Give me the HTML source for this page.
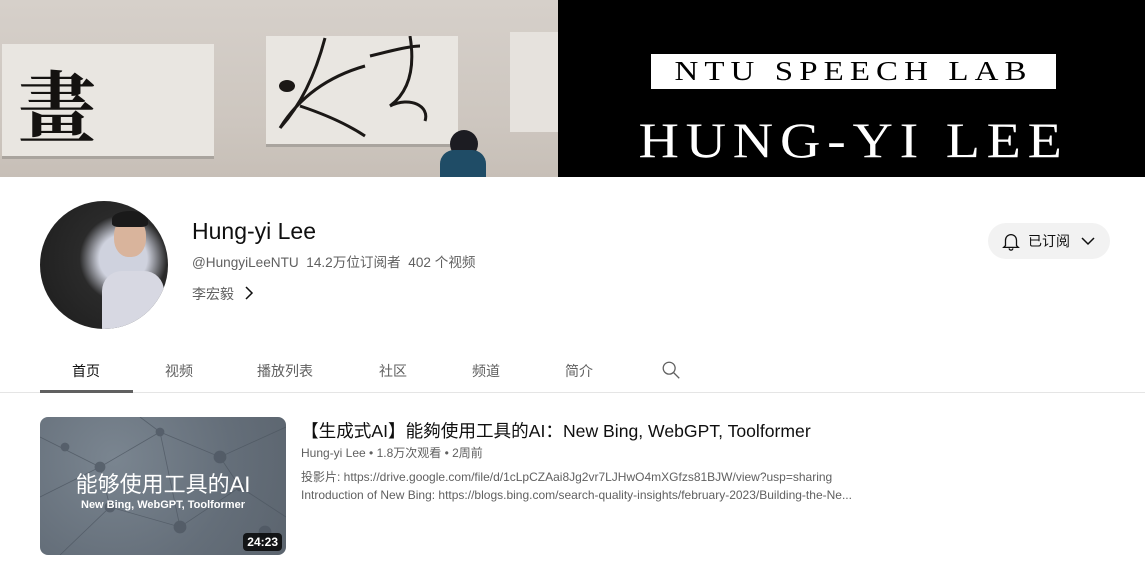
<!DOCTYPE html>
<html><head><meta charset="utf-8"><style>
*{margin:0;padding:0;box-sizing:border-box}
body{width:1145px;height:575px;overflow:hidden;background:#fff;font-family:"Liberation Sans","Noto Sans CJK SC",sans-serif;color:#0f0f0f;position:relative}
.a{position:absolute}
</style></head><body>
<div class="a" style="left:0;top:0;width:558px;height:177px;background:linear-gradient(180deg,#d6d0ca,#cdc6bf 70%,#c7bfb7);overflow:hidden">
 <div class="a" style="left:2px;top:44px;width:212px;height:112px;background:#e9e6e1;box-shadow:0 3px 0 #a9a49e"></div>
 <div class="a" style="left:266px;top:36px;width:192px;height:108px;background:#e9e6e1;box-shadow:0 3px 0 #a9a49e"></div>
 <div class="a" style="left:510px;top:32px;width:48px;height:100px;background:#e6e2dd"></div>
 <div class="a" style="left:18px;top:58px;width:160px;height:90px;color:#141210;font:bold 78px 'Noto Serif CJK SC',serif;line-height:90px">畫</div>
 <svg class="a" style="left:270px;top:36px" width="190" height="108"><path d="M55 2 C45 40 30 70 10 92 M10 92 C30 60 60 40 95 30 M100 20 C120 15 140 10 150 10 M140 0 C145 30 140 55 120 70 M30 70 C60 80 80 90 95 100 M120 70 C140 60 160 70 155 85" stroke="#1b1816" stroke-width="3" fill="none"/><ellipse cx="17" cy="50" rx="8" ry="6" fill="#1b1816"/></svg>
 <div class="a" style="left:450px;top:130px;width:28px;height:28px;border-radius:50%;background:#1c1c22"></div>
 <div class="a" style="left:440px;top:150px;width:46px;height:40px;border-radius:14px 14px 0 0;background:#1f4c66"></div>
</div>
<div class="a" style="left:558px;top:0;width:587px;height:177px;background:#000">
 <div class="a" style="left:93px;top:54px;width:405px;height:35px;background:#fff"></div>
 <div class="a" style="left:0;top:54px;width:591px;color:#000;font:27px 'Liberation Serif',serif;letter-spacing:5px;text-align:center;line-height:35px;transform:scaleX(1.22)">NTU SPEECH LAB</div>
 <div class="a" style="left:0;top:112px;width:591px;color:#fff;font:50px 'Liberation Serif',serif;letter-spacing:6px;text-align:center;line-height:56px;transform:scaleX(1.12)">HUNG-YI LEE</div>
</div>
<div class="a" style="left:40px;top:201px;width:128px;height:128px;border-radius:50%;background:radial-gradient(circle at 65% 45%,#cfd2de 0 22%,#2a2a2a 40%,#1c1c1c);overflow:hidden">
 <div class="a" style="left:62px;top:70px;width:62px;height:60px;background:#d7d8e2;border-radius:20px 20px 0 0"></div>
 <div class="a" style="left:74px;top:16px;width:32px;height:40px;background:#d9b49c;border-radius:45%"></div>
 <div class="a" style="left:72px;top:10px;width:36px;height:16px;background:#1a1a1a;border-radius:50% 50% 20% 20%"></div>
</div>
<div class="a" style="left:192px;top:218px;font-size:23px">Hung-yi Lee</div>
<div class="a" style="left:192px;top:251px;font-size:13.6px;color:#606060">@HungyiLeeNTU&nbsp; 14.2万位订阅者&nbsp; 402 个视频</div>
<div class="a" style="left:192px;top:284px;font-size:14px;color:#606060">李宏毅</div>
<svg class="a" style="left:243px;top:286px" width="12" height="14"><path d="M3 1l6 6-6 6" stroke="#0f0f0f" stroke-width="1.5" fill="none"/></svg>
<div class="a" style="left:988px;top:223px;width:122px;height:36px;border-radius:18px;background:#f2f2f2"></div>
<svg class="a" style="left:1000px;top:230px" width="22" height="22" viewBox="0 0 24 24"><path d="M6 17V11a6 6 0 0 1 12 0v6l2 2H4z M10 20a2 2 0 0 0 4 0" stroke="#0f0f0f" stroke-width="1.4" fill="none"/></svg>
<div class="a" style="left:1028px;top:231px;font-size:14px">已订阅</div>
<svg class="a" style="left:1080px;top:235px" width="16" height="12"><path d="M2 3l6 6 6-6" stroke="#0f0f0f" stroke-width="1.5" fill="none"/></svg>
<div class="a" style="left:0;top:392px;width:1145px;height:1px;background:#e5e5e5"></div>
<div class="a" style="left:40px;top:390px;width:93px;height:3px;background:#606060"></div>
<div class="a" style="top:361px;font-size:14px;color:#606060;left:0;width:100%">
<span class="a" style="left:72px;color:#0f0f0f">首页</span><span class="a" style="left:165px">视频</span><span class="a" style="left:257px">播放列表</span><span class="a" style="left:379px">社区</span><span class="a" style="left:472px">频道</span><span class="a" style="left:565px">简介</span></div>
<svg class="a" style="left:660px;top:359px" width="22" height="22" viewBox="0 0 24 24"><circle cx="10" cy="10" r="6.5" stroke="#606060" stroke-width="1.4" fill="none"/><path d="M15 15l6 6" stroke="#606060" stroke-width="1.4"/></svg>
<div class="a" style="left:40px;top:417px;width:246px;height:138px;border-radius:8px;background:radial-gradient(circle at 30% 30%,#7a8590,#646e79 60%,#5b646e);overflow:hidden">
 <svg class="a" style="left:0;top:0" width="246" height="138"><g stroke="#4c5560" stroke-width="0.8" fill="#4c5560" opacity=".7"><path d="M0 20L60 50L120 15L180 40L246 10M20 138L70 90L140 110L200 70L246 100M60 50L70 90M120 15L140 110M180 40L200 70M0 80L60 50M100 0L120 15" fill="none"/><circle cx="60" cy="50" r="5"/><circle cx="120" cy="15" r="4"/><circle cx="180" cy="40" r="6"/><circle cx="70" cy="90" r="5"/><circle cx="140" cy="110" r="6"/><circle cx="200" cy="70" r="4"/><circle cx="25" cy="30" r="4"/><circle cx="225" cy="115" r="6"/></g></svg>
 <div class="a" style="left:0;top:50px;width:246px;text-align:center;color:#fff;font-size:22px">能够使用工具的AI</div>
 <div class="a" style="left:0;top:82px;width:246px;text-align:center;color:#fff;font-size:11px;font-weight:bold">New Bing, WebGPT, Toolformer</div>
 <div class="a" style="right:4px;bottom:4px;background:rgba(0,0,0,.8);color:#fff;font-size:12px;font-weight:bold;padding:2px 4px;border-radius:4px">24:23</div>
</div>
<div class="a" style="left:301px;top:418px;font-size:17.6px">【生成式AI】能夠使用工具的AI：New Bing, WebGPT, Toolformer</div>
<div class="a" style="left:301px;top:444px;font-size:12px;color:#606060">Hung-yi Lee • 1.8万次观看 • 2周前</div>
<div class="a" style="left:301px;top:468px;font-size:12px;color:#606060;line-height:18px">投影片: https://drive.google.com/file/d/1cLpCZAai8Jg2vr7LJHwO4mXGfzs81BJW/view?usp=sharing<br>Introduction of New Bing: https://blogs.bing.com/search-quality-insights/february-2023/Building-the-Ne...</div>
</body></html>
